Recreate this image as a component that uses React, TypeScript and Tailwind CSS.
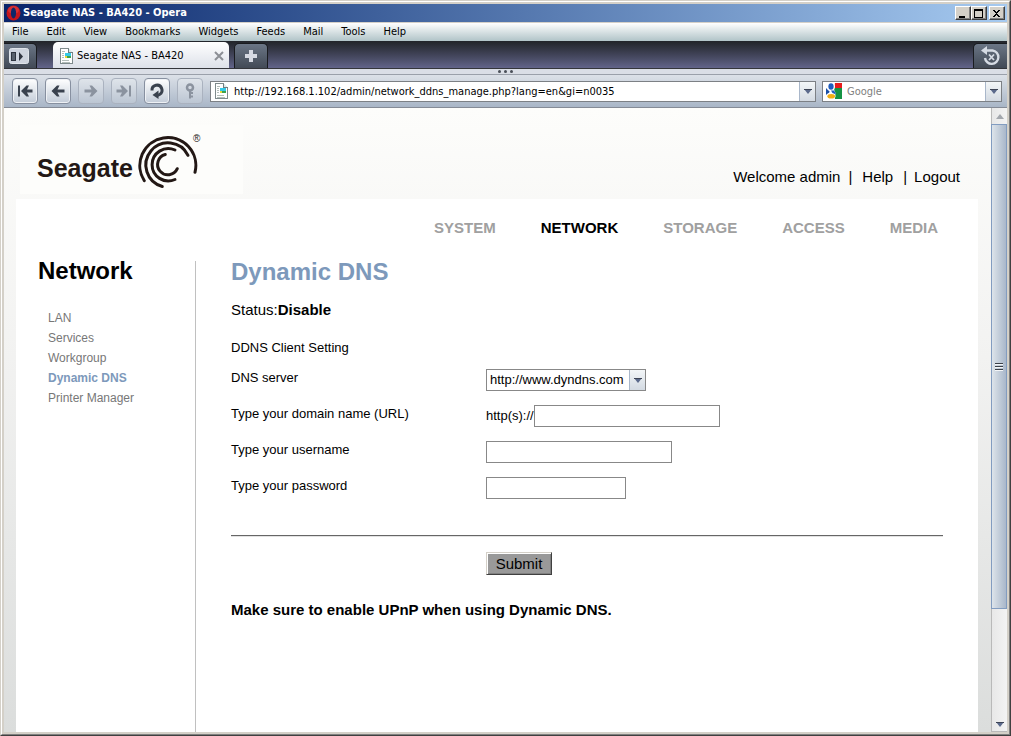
import React from "react";

const MENU = ["File", "Edit", "View", "Bookmarks", "Widgets", "Feeds", "Mail", "Tools", "Help"];
const SECTIONS = ["SYSTEM", "NETWORK", "STORAGE", "ACCESS", "MEDIA"];
const PAGES = ["LAN", "Services", "Workgroup", "Dynamic DNS", "Printer Manager"];

function OperaIcon() {
  return (
    <svg width="15" height="16" viewBox="0 0 15 16" aria-hidden="true">
      <ellipse cx="7.5" cy="8" rx="7" ry="7.5" fill="#c4161c" />
      <ellipse cx="7.5" cy="5" rx="5.5" ry="4" fill="#e8474b" opacity="0.5" />
      <ellipse cx="7.5" cy="8" rx="2.6" ry="5.4" fill="#0e2769" />
    </svg>
  );
}

function PageIcon() {
  return (
    <svg width="13" height="16" viewBox="0 0 13 16" shapeRendering="crispEdges" aria-hidden="true">
      <path d="M.5.5h8l4 4v11H.5z" fill="#fff" stroke="#7f8b8d" />
      <path d="M8.500 .5v4h4" fill="#dfe8e8" stroke="#6f7d80" />
      <path d="M2 3.500h3M2 5.500h2M2 7.500h2M2 12.500h7M2 14.500h8" stroke="#b4beba" />
      <rect x="5" y="5" width="6" height="3" fill="#35c9e8" />
      <rect x="5" y="8" width="6" height="2" fill="#3da24d" />
      <rect x="5" y="8" width="2" height="2" fill="#e8d63a" />
      <rect x="2" y="9" width="2" height="1" fill="#b4beba" />
    </svg>
  );
}

function CaptionButton({ label, children }: { label: string; children: React.ReactNode }) {
  return (
    <button
      aria-label={label}
      className="flex h-[14px] w-4 items-center justify-center border border-t-white border-r-[#404040] border-b-[#404040] border-l-white bg-[#d4d0c8] shadow-[inset_-1px_-1px_0_#808080]"
    >
      <svg width="10" height="9" viewBox="0 0 10 9" shapeRendering="crispEdges" aria-hidden="true">
        {children}
      </svg>
    </button>
  );
}

function ToolButton({ label, faded, children }: { label: string; faded?: boolean; children: React.ReactNode }) {
  return (
    <button
      aria-label={label}
      disabled={faded}
      className={
        faded
          ? "flex size-[26px] shrink-0 items-center justify-center rounded-[4px] border border-[#aab2bf] bg-linear-to-b from-[#dfe4ea] to-[#bcc6d3] text-[#8b939f]"
          : "flex size-[26px] shrink-0 items-center justify-center rounded-[4px] border border-[#8790a0] bg-linear-to-b from-white to-[#c3ccd8] text-[#3a424e] shadow-[inset_0_0_0_1px_#eef1f5]"
      }
    >
      <svg width="18" height="18" viewBox="0 0 18 18" fill="none" stroke="currentColor" strokeWidth="3" aria-hidden="true">
        {children}
      </svg>
    </button>
  );
}

function DropArrow() {
  return (
    <svg width="8" height="5" viewBox="0 0 8 5" aria-hidden="true">
      <path d="M0 0h8L4 5z" fill="#5b6a8c" />
      <path d="M0 0h8v1H0z" fill="#3d4455" />
    </svg>
  );
}

function DropButton({ label }: { label: string }) {
  return (
    <button
      aria-label={label}
      className="flex w-4 shrink-0 items-center justify-center self-stretch border-l border-[#a9b7ca] bg-linear-to-b from-[#f3f6f8] to-[#d3dae2]"
    >
      <DropArrow />
    </button>
  );
}

function GoogleIcon() {
  return (
    <svg width="16" height="16" viewBox="0 0 16 16" aria-hidden="true">
      <rect width="16" height="16" fill="#fff" />
      <path d="M9 0h7v5H8z" fill="#e81c1c" />
      <path d="M8 5h8v11H9z" fill="#159344" />
      <path d="M0 5l4 4-4 3z" fill="#1b50a8" />
      <ellipse cx="5" cy="3.500" rx="4" ry="4.200" fill="#fff" />
      <ellipse cx="5" cy="3.500" rx="2.600" ry="3.200" fill="#1f5dc0" />
      <path d="M4 8l4-1 2 4-4 2-3-2z" fill="#fff" />
      <path d="M5 7.500h3l2 3.500H7z" fill="#1f5dc0" />
      <ellipse cx="5" cy="13" rx="4.600" ry="3" fill="#fff" />
      <ellipse cx="5.200" cy="13.300" rx="3.800" ry="2.300" fill="#f2ae14" />
    </svg>
  );
}

function TitleBar() {
  return (
    <header className="flex h-[18px] items-center bg-linear-to-r from-[#0a246a] to-[#a6caf0] px-[2px]">
      <OperaIcon />
      <h1 className="ml-[2px] flex-1 text-[11px] leading-[18px] font-bold text-white">Seagate NAS - BA420 - Opera</h1>
      <CaptionButton label="Minimize">
        <path d="M1 7h6v2H1z" />
      </CaptionButton>
      <CaptionButton label="Maximize">
        <path d="M0 0h9v9H0zM1 2v6h7V2z" fillRule="evenodd" />
      </CaptionButton>
      <span className="w-[2px]" />
      <CaptionButton label="Close">
        <path d="M1 1h2v1h1v1h1V2h1V1h2v1H7v1H6v1H5v1h1v1h1v1h1v1H6V7H5V6H4v1H3v1H1V7h1V6h1V5h1V4H3V3H2V2H1z" />
      </CaptionButton>
    </header>
  );
}

function TabBar() {
  return (
    <div className="flex h-7 items-end border-b border-[#34363b] bg-linear-to-b from-[#212429] to-[#62648a]">
      <button
        aria-label="Panels"
        className="flex h-[25px] w-[33px] items-center rounded-tr-[5px] border-t border-r border-[#191b1f] bg-linear-to-b from-[#6b7686] to-[#424a56] pl-[5px]"
      >
        <svg width="20" height="16" viewBox="0 0 20 16" aria-hidden="true">
          <rect x=".5" y=".5" width="19" height="15" rx="2" fill="#ced4de" stroke="#dfe4ea" />
          <rect x="2.500" y="4.500" width="4" height="8" fill="#59616d" stroke="#2f3540" />
          <path d="M10 4v9l4-4.500z" fill="#2f3540" />
        </svg>
      </button>
      <div className="ml-4 flex h-[26px] w-[176px] items-center rounded-t-[5px] bg-linear-to-b from-white to-[#dde1e9] pt-px pr-[5px] pl-[7px]">
        <PageIcon />
        <span className="ml-1 flex-1 text-[11px] leading-4 whitespace-nowrap text-black">Seagate NAS - BA420</span>
        <button aria-label="Close tab" className="text-[#8c8f95]">
          <svg width="10" height="10" viewBox="0 0 10 10" stroke="currentColor" strokeWidth="2" aria-hidden="true">
            <path d="M1 1l8 8M9 1L1 9" />
          </svg>
        </button>
      </div>
      <button
        aria-label="New tab"
        className="ml-[5px] flex h-[25px] w-[34px] items-center justify-center rounded-t-[5px] border border-b-0 border-[#191b1f] bg-linear-to-b from-[#6b7686] to-[#424a56]"
      >
        <svg width="12" height="12" viewBox="0 0 12 12" aria-hidden="true">
          <path d="M4 0h4v4h4v4H8v4H4V8H0V4h4z" fill="#d5d9e2" />
        </svg>
      </button>
      <button
        aria-label="Closed tabs"
        className="ml-auto flex h-[25px] w-[34px] items-center justify-center rounded-tl-[5px] border-t border-l border-[#191b1f] bg-linear-to-b from-[#6b7686] to-[#424a56]"
      >
        <svg width="20" height="20" viewBox="0 0 20 20" fill="none" stroke="#d5dbe4" aria-hidden="true">
          <path d="M5 4.500h6.500a6.700 6.700 0 1 1-7.500 7.500" strokeWidth="2.400" />
          <path d="M0 4.500L6 0v9z" fill="#d5dbe4" stroke="none" />
          <path d="M8 8.500l5 5.500M13 8.500L8 14" strokeWidth="1.800" />
        </svg>
      </button>
    </div>
  );
}

function Toolbar() {
  return (
    <div className="flex h-[33px] items-center gap-[7px] border-b border-[#858b96] bg-linear-to-b from-[#dce1e8] to-[#a9b6c7] pr-[5px] pl-2">
      <ToolButton label="Rewind">
        <path d="M3 3.500v11" strokeWidth="2" />
        <path d="M5 9l5.500-5.500H13L11 7.500h5.500v3H11l2 4h-2.500z" fill="currentColor" stroke="none" />
      </ToolButton>
      <ToolButton label="Back">
        <path d="M2.500 9L8 3.500h2.500l-2 4h7v3h-7l2 4H8z" fill="currentColor" stroke="none" />
      </ToolButton>
      <ToolButton label="Forward" faded>
        <path d="M15.500 9L10 3.500H7.500l2 4h-7v3h7l-2 4H10z" fill="currentColor" stroke="none" />
      </ToolButton>
      <ToolButton label="Fast forward" faded>
        <path d="M15 3.500v11" strokeWidth="2" />
        <path d="M13 9L7.500 3.500H5l2 4H1.500v3H7l-2 4h2.500z" fill="currentColor" stroke="none" />
      </ToolButton>
      <ToolButton label="Reload">
        <path d="M4 8.500a5 5 0 1 1 7.500 4L9.500 13.500" />
        <path d="M4.500 13l6-4.500v8.500z" fill="currentColor" stroke="none" />
      </ToolButton>
      <ToolButton label="Wand" faded>
        <circle cx="9" cy="5.500" r="3" strokeWidth="2.500" />
        <path d="M9 8.500v8M9 11h3M9 14.500h3" strokeWidth="2" />
      </ToolButton>
      <form className="flex min-w-0 flex-1 gap-[6px]" onSubmit={(e) => e.preventDefault()}>
        <div className="flex h-[21px] min-w-0 flex-1 items-center border border-[#7c8085] bg-white pl-1">
          <PageIcon />
          <input
            aria-label="Address"
            className="ml-[6px] min-w-0 flex-1 pt-px text-[11px] leading-4 text-black outline-none"
            defaultValue="http://192.168.1.102/admin/network_ddns_manage.php?lang=en&gi=n0035"
          />
          <DropButton label="Address history" />
        </div>
        <div className="flex h-[21px] w-[180px] shrink-0 items-center border border-[#7c8085] bg-white pl-[3px]">
          <GoogleIcon />
          <input
            aria-label="Search"
            placeholder="Google"
            className="ml-[5px] min-w-0 flex-1 pt-px text-[11px] leading-4 outline-none placeholder:text-[#808080]"
          />
          <DropButton label="Search engines" />
        </div>
      </form>
    </div>
  );
}

function SeagateLogo() {
  return (
    <div className="flex h-[69px] w-[223px] items-start bg-[#fdfdfb] pt-[9px] pl-[17px] text-[#231815]">
      <span className="pt-5 text-[25px] leading-7 font-bold">Seagate</span>
      <svg className="ml-[5px] shrink-0" width="60" height="56" viewBox="139 134 60 56" fill="none" stroke="#231815" strokeWidth="3" strokeLinecap="round" aria-hidden="true">
        <path d="M145.300 180.700A28 28 0 1 1 196 172.300" />
        <path d="M163.300 186.500A22.200 22.200 0 1 1 189 155.300" />
        <path d="M176 179.500A16.200 16.200 0 1 1 176 150" />
        <path d="M166.300 154.500A10.300 10.300 0 1 0 178.300 168.700" />
      </svg>
      <span className="-ml-[5px] text-[10px] leading-[10px]">®</span>
    </div>
  );
}

function Field({ id, label, children }: { id: string; label: string; children: React.ReactNode }) {
  return (
    <div className="flex h-[22px] items-center">
      <label htmlFor={id} className="mb-1 w-[255px] shrink-0">
        {label}
      </label>
      {children}
    </div>
  );
}

function DdnsPage() {
  return (
    <main className="min-w-0 flex-1 px-[35px] text-black">
      <h2 className="text-2xl leading-[22px] font-bold text-[#7d99bb]">Dynamic DNS</h2>
      <p className="mt-[17px] text-[15px] leading-5">
        Status:<b>Disable</b>
      </p>
      <form className="mt-[18px] text-[13px] leading-5" onSubmit={(e) => e.preventDefault()}>
        <h3>DDNS Client Setting</h3>
        <div className="mt-[11px] flex flex-col gap-[14px]">
          <Field id="server" label="DNS server">
            <div className="grid h-[22px] w-40 grid-cols-[1fr_16px] border border-[#888]">
              <select id="server" className="col-span-2 col-start-1 row-start-1 appearance-none bg-white pl-[3px] outline-none">
                <option>http://www.dyndns.com</option>
              </select>
              <span className="pointer-events-none col-start-2 row-start-1 flex items-center justify-center border-l border-[#a9b7ca] bg-linear-to-b from-[#f3f6f8] to-[#d3dae2]">
                <DropArrow />
              </span>
            </div>
          </Field>
          <Field id="domain" label="Type your domain name (URL)">
            <span>http(s)://</span>
            <input id="domain" className="h-[22px] w-[186px] border border-[#888] bg-white px-1" />
          </Field>
          <Field id="username" label="Type your username">
            <input id="username" className="h-[22px] w-[186px] border border-[#888] bg-white px-1" />
          </Field>
          <Field id="password" label="Type your password">
            <input id="password" type="password" className="h-[22px] w-[140px] border border-[#888] bg-white px-1" />
          </Field>
        </div>
        <hr className="mt-9 border-t border-b border-t-[#666] border-b-[#e2e2e2]" />
        <button
          type="submit"
          className="mt-[15px] ml-[255px] block h-[23px] w-[66px] border border-t-[#d4d0c8] border-r-[#404040] border-b-[#404040] border-l-[#d4d0c8] bg-[#999] text-[15px] leading-5 shadow-[inset_1px_1px_0_#fff,inset_-1px_-1px_0_#808080]"
        >
          Submit
        </button>
      </form>
      <p className="mt-[25px] text-[15px] leading-5 font-bold">Make sure to enable UPnP when using Dynamic DNS.</p>
    </main>
  );
}

function Scrollbar() {
  return (
    <div className="flex w-4 shrink-0 flex-col border-l border-[#b9b9b9] bg-linear-to-r from-[#e8e8e8] to-[#f3f3f3]" aria-hidden="true">
      <span className="flex h-4 items-center justify-center">
        <svg width="8" height="5" viewBox="0 0 8 5">
          <path d="M4 0l4 5H0z" fill="#a3a7ad" />
        </svg>
      </span>
      <span className="-ml-px flex flex-[485] items-center justify-center border border-[#829cc0] bg-linear-to-r from-[#dde4ea] to-[#a9b7ca]">
        <svg width="8" height="9" viewBox="0 0 8 9" shapeRendering="crispEdges">
          <path d="M0 1h8v1H0zM0 4h8v1H0zM0 7h8v1H0z" fill="#3b4048" />
          <path d="M0 2h8v1H0zM0 5h8v1H0zM0 8h8v1H0z" fill="#f4f6f8" />
        </svg>
      </span>
      <span className="flex-[108]" />
      <span className="flex h-[15px] items-center justify-center border-b border-[#b9b9b9]">
        <DropArrow />
      </span>
    </div>
  );
}

export default function App() {
  return (
    <div className="flex min-h-screen flex-col border-t border-r border-b border-l border-t-[#d4d0c8] border-r-[#404040] border-b-[#404040] border-l-[#d4d0c8] bg-[#d4d0c8] font-['Liberation_Sans',Arial,sans-serif]">
      <div className="flex flex-1 flex-col border border-t-white border-r-[#808080] border-b-[#808080] border-l-white p-[2px]">
        <div className="font-['DejaVu_Sans_Condensed','DejaVu_Sans',Tahoma,sans-serif]">
          <TitleBar />
          <nav className="mt-px flex h-[18px] items-center gap-[18px] bg-linear-to-b from-white to-[#b1c4c8] pl-2 text-[11px] leading-4 text-black">
            {MENU.map((item) => (
              <button key={item}>{item}</button>
            ))}
          </nav>
          <TabBar />
          <div className="flex h-[6px] items-center justify-center gap-[3px] border-b border-[#9aa0aa] bg-[#dadee6]">
            <span className="size-[3px] rounded-full bg-[#4a4f58]" />
            <span className="size-[3px] rounded-full bg-[#4a4f58]" />
            <span className="size-[3px] rounded-full bg-[#4a4f58]" />
          </div>
          <Toolbar />
        </div>
        <div className="flex flex-1">
          <div className="flex min-w-0 flex-1 flex-col bg-linear-to-b from-[#fdfdfb] via-[#f2f2f1] via-40% to-[#dbdddc] pr-[13px] pl-3">
            <div className="flex h-[91px] items-start justify-between pt-[17px] pl-1">
              <SeagateLogo />
              <div className="mt-[42px] mr-[18px] flex text-[15px] leading-5 text-black">
                <span>Welcome admin</span>
                <span className="ml-2">|</span>
                <a href="#help" className="ml-[10px]">Help</a>
                <span className="ml-[10px]">|</span>
                <a href="#logout" className="ml-[7px]">Logout</a>
              </div>
            </div>
            <div className="flex flex-1 flex-col bg-white">
              <nav className="flex justify-end gap-[45px] pt-[18px] pr-10 pb-[22px] text-[15px] leading-[22px] font-bold text-[#a0a0a0]">
                {SECTIONS.map((s) => (
                  <a key={s} href={"#" + s.toLowerCase()} className={s === "NETWORK" ? "text-black" : undefined}>
                    {s}
                  </a>
                ))}
              </nav>
              <div className="flex flex-1">
                <aside className="w-[180px] shrink-0 border-r border-[#c0c0c0] pl-[22px]">
                  <h2 className="text-2xl leading-5 font-bold text-black">Network</h2>
                  <ul className="mt-[27px] pl-[10px] text-[12px] leading-5 text-[#777]">
                    {PAGES.map((p) => (
                      <li key={p}>
                        <a href={"#" + p.toLowerCase().replace(" ", "-")} className={p === "Dynamic DNS" ? "font-bold text-[#7d99bb]" : undefined}>
                          {p}
                        </a>
                      </li>
                    ))}
                  </ul>
                </aside>
                <DdnsPage />
              </div>
            </div>
          </div>
          <Scrollbar />
        </div>
      </div>
    </div>
  );
}
